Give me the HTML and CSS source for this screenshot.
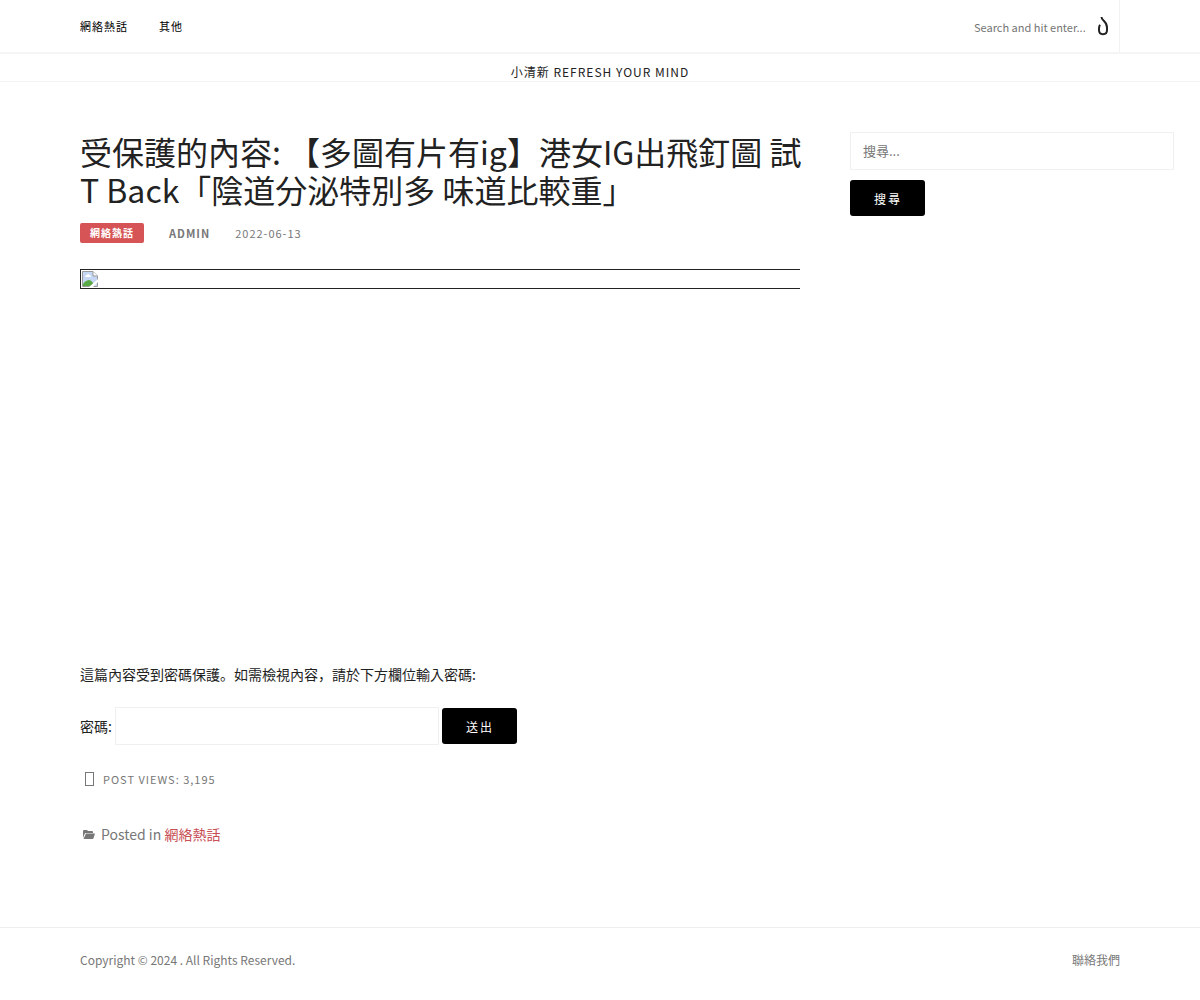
FILE: index.html
```html
<!DOCTYPE html>
<html lang="ja">
<head>
<meta charset="utf-8">
<meta name="viewport" content="width=device-width, initial-scale=1">
<title>小清新 Refresh Your Mind</title>
<link rel="stylesheet" href="styles.css">
</head>
<body>
<header>
  <div class="topbar">
    <div class="container topbar-inner">
      <nav class="menu">
        <a href="#">網絡熱話</a>
        <a href="#">其他</a>
      </nav>
      <form class="top-search">
        <input type="search" class="top-search-field" placeholder="Search and hit enter..." aria-label="Search">
        <button type="button" class="top-search-button" aria-label="Search">
          <svg width="12" height="20" viewBox="0 0 12 20" fill="none" stroke="currentColor" stroke-width="2"><path d="M4.500 1C4.500 5 10 5 10 11.500V14C10 17 8.800 18.200 6 18.200C3 18.200 2 17 2 14V12.500C2 11 2.200 10 3 8.800"/></svg>
        </button>
      </form>
    </div>
  </div>
  <p class="tagline">小清新 Refresh Your Mind</p>
</header>
<div class="container layout">
  <main class="content">
    <article>
      <h1 class="title">受保護的內容: 【多圖有片有ig】港女IG出飛釘圖 試T Back「陰道分泌特別多 味道比較重」</h1>
      <div class="meta">
        <a class="badge" href="#">網絡熱話</a>
        <a class="author" href="#">Admin</a>
        <time datetime="2022-06-13">2022-06-13</time>
      </div>
      <div class="media">
        <div class="missing">
          <svg width="16" height="16" viewBox="0 0 16 16"><path d="M.5 .5H11L15.500 5V15.500H.5Z" fill="#c5d7f3" stroke="#9a9a9a"/><path d="M1 15V13Q4 9 7.500 9Q10 10 11 12V15Z" fill="#58a846"/><path d="M3 6Q3 4 5 4Q6 2 7.500 4Q9 4 9 6Z" fill="#fff"/><path d="M11 .5V5H15.500" fill="#fff" stroke="#9a9a9a"/><path d="M7 16L16 8V11L11 16Z" fill="#fff"/></svg>
        </div>
      </div>
      <form class="password">
        <p>這篇內容受到密碼保護。如需檢視內容，請於下方欄位輸入密碼:</p>
        <div class="password-row">
          <label for="pwd">密碼:</label>
          <input id="pwd" class="field" type="password">
          <button class="button" type="button">送出</button>
        </div>
      </form>
      <p class="views"><span class="glyph"></span>Post Views: 3,195</p>
      <footer class="posted">
        <svg width="12" height="12" viewBox="0 0 12 12" fill="currentColor"><path d="M0 3Q0 2 1 2H4L5 3H9Q10 3 10 4V5H3Q2 5 1.600 6L0 10ZM3 5.500H12L10.500 10.300Q10.200 11 9.500 11H.5Z"/></svg>
        <span>Posted in <a href="#">網絡熱話</a></span>
      </footer>
    </article>
  </main>
  <aside class="sidebar">
    <form class="search">
      <input class="field" type="search" placeholder="搜尋..." aria-label="搜尋">
      <button class="button" type="button">搜尋</button>
    </form>
  </aside>
</div>
<footer class="site-footer">
  <div class="container footer-inner">
    <span>Copyright © 2024 . All Rights Reserved.</span>
    <a href="#">聯絡我們</a>
  </div>
</footer>
</body>
</html>
```
FILE: styles.css
```css
* { box-sizing: border-box; }
body {
  margin: 0;
  background: #fff;
  color: #222;
  font: 14px/24px "Noto Sans CJK JP", "Noto Sans CJK TC", sans-serif;
  overflow-x: hidden;
}
h1, p { margin: 0; font-weight: 400; }
a { color: inherit; text-decoration: none; }
svg { display: block; flex: none; }
input, button { font-family: inherit; }
.container {
  max-width: 1120px;
  margin: 0 auto;
  padding: 0 40px;
}
.topbar { border-bottom: 2px solid #f5f5f5; }
.topbar-inner {
  display: flex;
  justify-content: space-between;
  min-height: 52px;
}
.menu {
  display: flex;
  align-items: center;
  gap: 31px;
  color: #000;
  font-size: 11px;
  letter-spacing: 1px;
}
.top-search {
  display: flex;
  align-items: center;
  padding-right: 10px;
  border-right: 1px solid #f2f2f2;
}
.top-search-field {
  width: 123px;
  padding: 2px 0 0;
  border: 0;
  background: none;
  font-size: 11px;
}
.top-search-button {
  padding: 0;
  border: 0;
  background: none;
  color: #222;
}
::placeholder { color: #757575; opacity: 1; }
.tagline {
  padding-top: 8px;
  border-bottom: 1px solid #f2f2f2;
  font-size: 12px;
  line-height: 19px;
  letter-spacing: 1px;
  text-align: center;
  text-transform: uppercase;
}
.layout {
  display: grid;
  grid-template-columns: minmax(0, 1fr) 270px;
  gap: 50px;
  padding-top: 50px;
  padding-bottom: 81px;
}
.title {
  margin-right: -8px;
  font-size: 32px;
  line-height: 38px;
}
.meta {
  display: flex;
  align-items: center;
  gap: 25px;
  margin-top: 15px;
  color: #777;
  font-size: 11px;
  line-height: 20px;
  letter-spacing: 1px;
  text-transform: uppercase;
}
.badge {
  padding: 0 10px;
  border-radius: 2px;
  background: #d65456;
  color: #fff;
  font-size: 10px;
  font-weight: 700;
}
.author { font-weight: 700; }
.media { min-height: 419px; padding-top: 26px; }
.missing {
  padding: 1px;
  border: 1px solid #222;
  border-right: 0;
}
.password-row {
  display: flex;
  align-items: center;
  gap: 3px;
  margin-top: 21px;
}
.field {
  width: 324px;
  height: 38px;
  padding: 0 12px 2px;
  border: 1px solid #f0f0f0;
  background: #fff;
  font-size: 13px;
}
.button {
  height: 36px;
  padding: 0 23px 0 24px;
  border: 0;
  border-radius: 3px;
  background: #000;
  color: #fff;
  font-size: 12px;
  letter-spacing: 2px;
}
.views {
  display: flex;
  align-items: center;
  gap: 9px;
  margin-top: 22px;
  padding-left: 5px;
  color: #777;
  font-size: 11px;
  letter-spacing: 1px;
  text-transform: uppercase;
}
.glyph {
  width: 9px;
  height: 14px;
  border: 1px solid #777;
}
.posted {
  display: flex;
  align-items: center;
  gap: 6px;
  margin-top: 31px;
  padding-left: 3px;
  color: #777;
}
.posted a { color: #c84f55; }
.search {
  display: flex;
  flex-direction: column;
  align-items: flex-start;
  gap: 10px;
}
.site-footer { border-top: 1px solid #eee; }
.footer-inner {
  display: flex;
  justify-content: space-between;
  padding-top: 20px;
  padding-bottom: 28px;
  color: #777;
  font-size: 12px;
}
```
